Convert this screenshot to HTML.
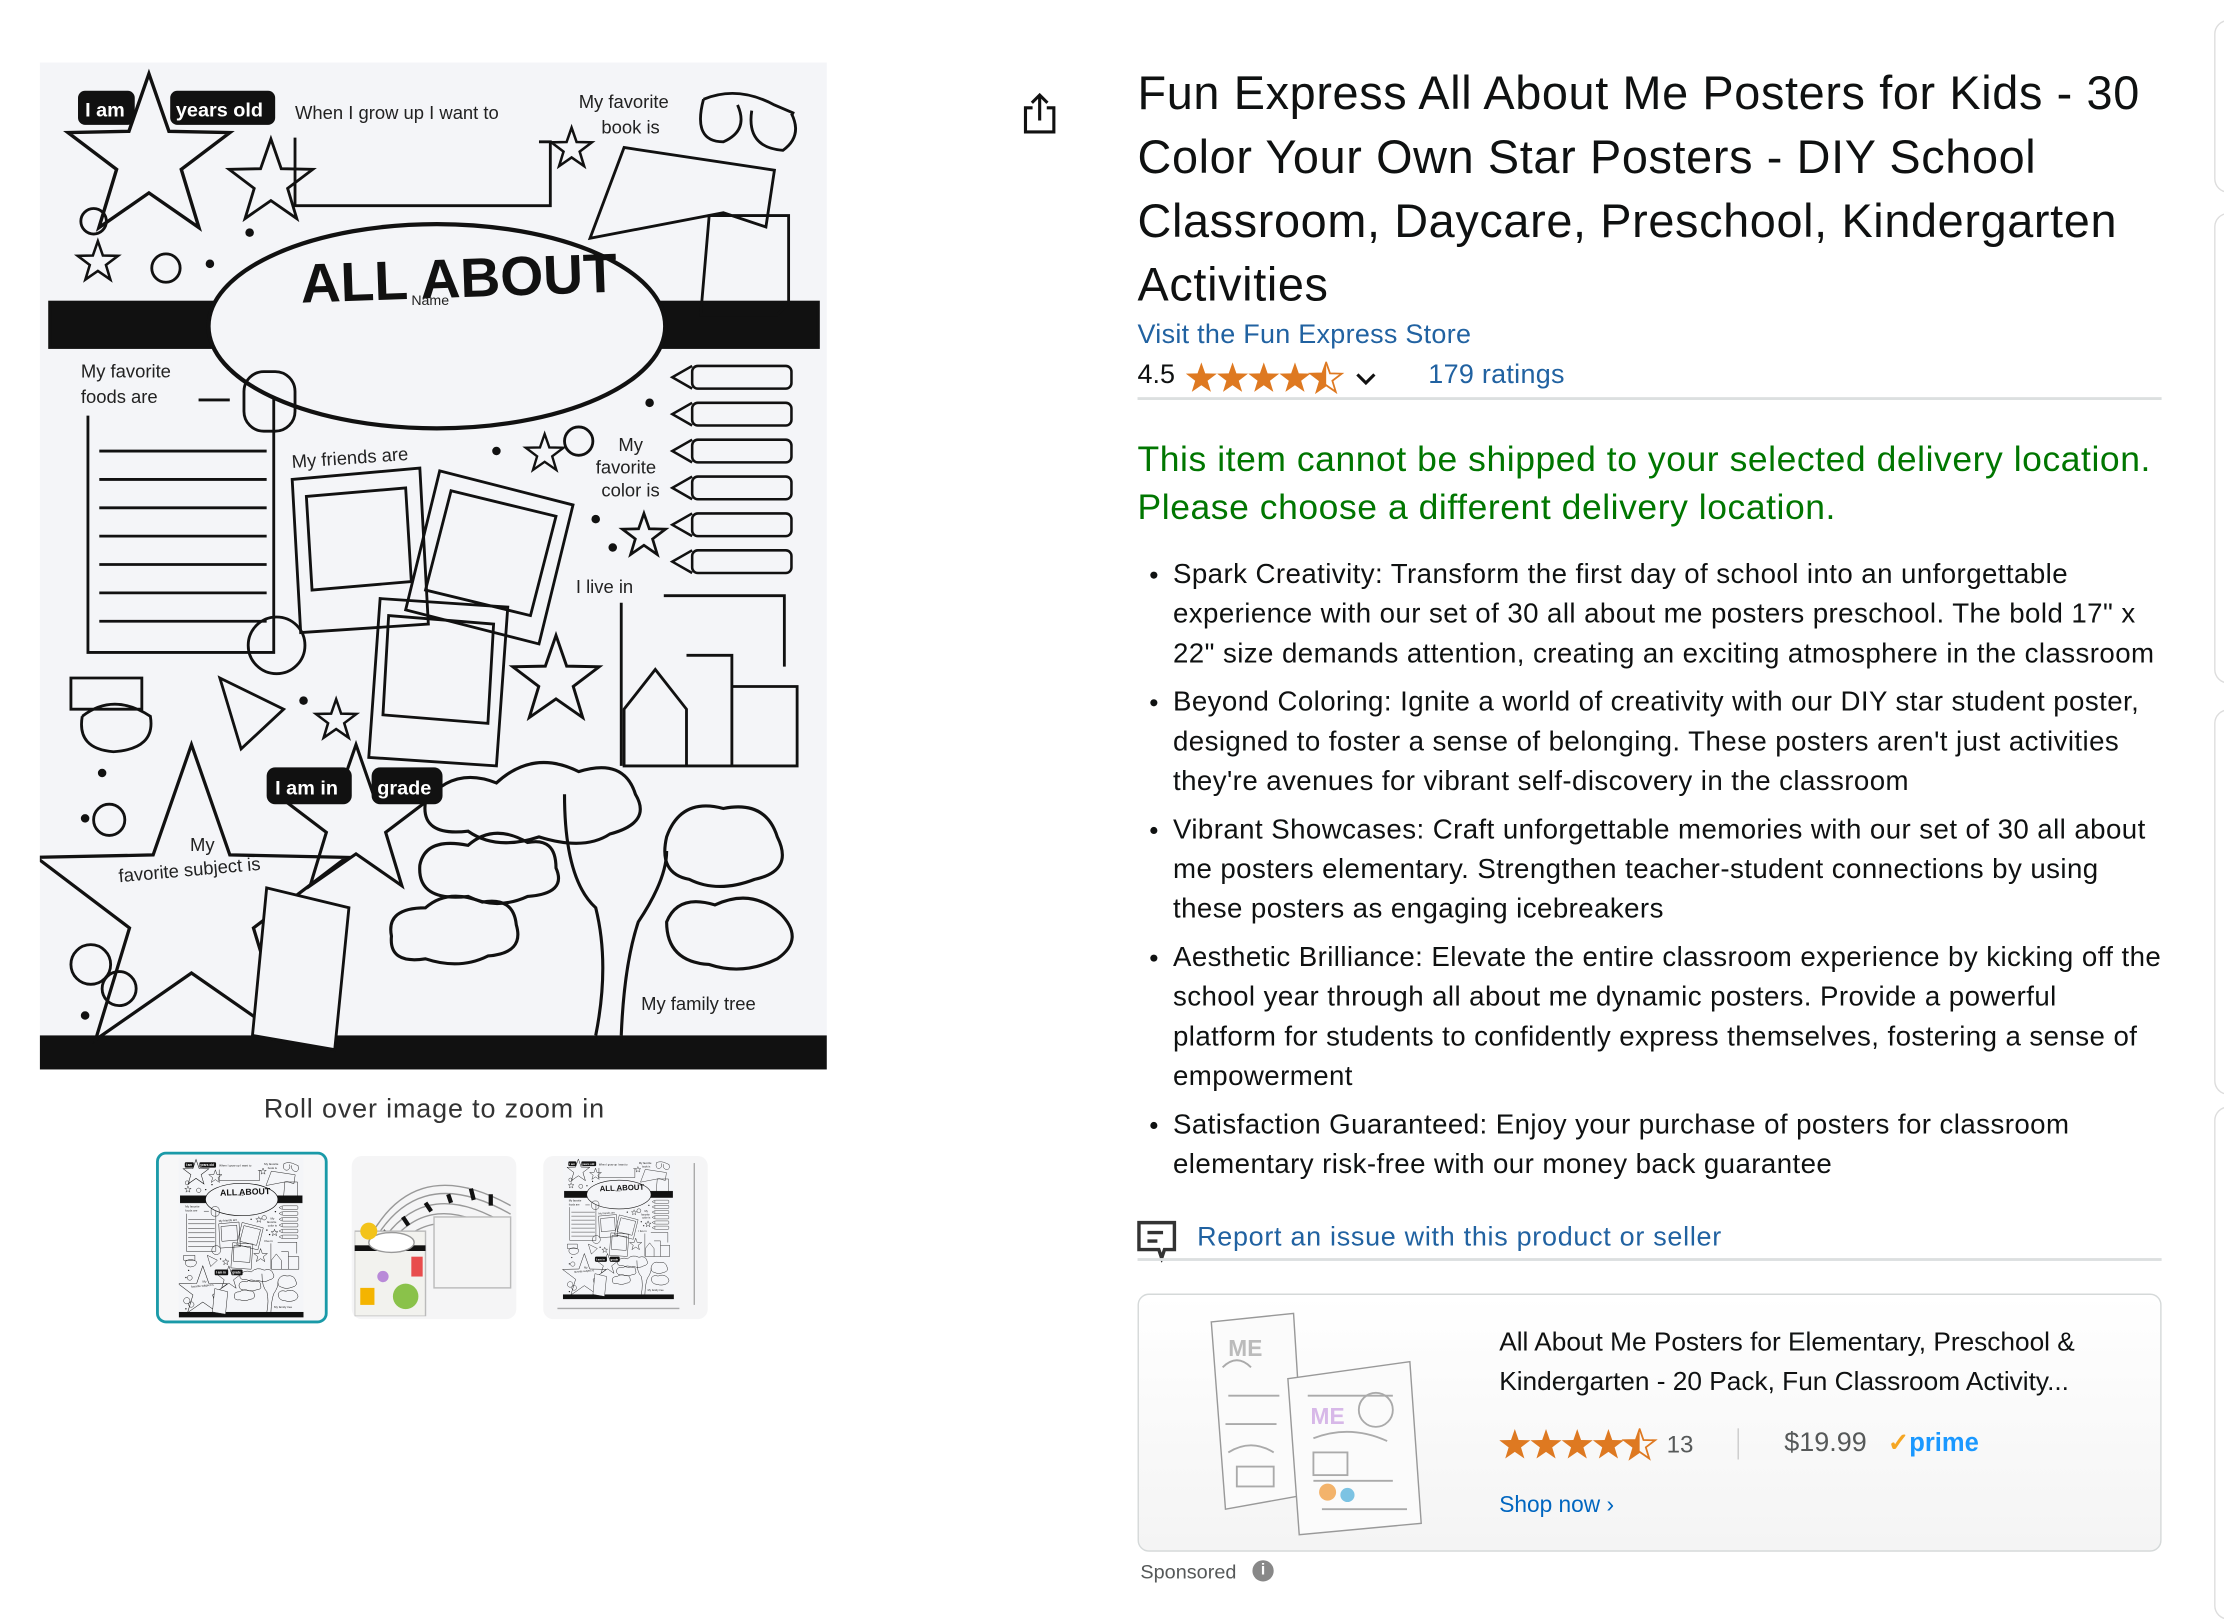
<!DOCTYPE html>
<html><head><meta charset="utf-8">
<style>
html,body{margin:0;padding:0;background:#fff;overflow:hidden}
#w{position:absolute;left:0;top:0;width:1568px;height:1140px;transform:scale(1.41837);transform-origin:0 0;font-family:"Liberation Sans",Arial,sans-serif;color:#0f1111}
.a{position:absolute;white-space:nowrap}
.title{left:802px;top:43px;font-size:33px;line-height:45px;color:#0f1111;letter-spacing:0.45px}
.blue{color:#2162a1}
.green{left:802px;top:307px;font-size:25px;line-height:34px;color:#007600;letter-spacing:0.4px}
ul{position:absolute;left:802px;top:391px;margin:0;padding:0 0 0 25px;font-size:19.5px;line-height:28px;list-style:none;letter-spacing:0.3px}
li{position:relative;margin-bottom:6px;white-space:nowrap}
li:before{content:"";position:absolute;left:-16px;top:12px;width:5px;height:5px;border-radius:50%;background:#0f1111}
.hr{position:absolute;left:802px;width:722px;height:2px;background:#dcdfe0}
.card{position:absolute;left:802px;top:912px;width:720px;height:180px;border:1.5px solid #d5d9d9;border-radius:8px;background:linear-gradient(#fff,#f4f4f4)}
.thumb{position:absolute;border-radius:7px;background:#f5f5f6}
</style></head><body><div id="w">
<svg width="0" height="0" style="position:absolute">
<defs>
<polygon id="sp" points="0,-1 .235,-.324 .951,-.309 .380,.124 .588,.809 0,.4 -.588,.809 -.380,.124 -.951,-.309 -.235,-.324"/>
<symbol id="poster" viewBox="28 44 555 710">
<rect x="28" y="44" width="555" height="710" fill="#f4f5f8"/>
<g fill="none" stroke="#111" stroke-width="2">
<rect x="35" y="213" width="542" height="32" fill="#111"/>
<ellipse cx="308" cy="230" rx="161" ry="72" fill="#f4f5f8" stroke-width="3"/>
<rect x="28" y="730" width="555" height="24" fill="#111" stroke="none"/>
<use href="#sp" transform="translate(105 112) scale(60)" stroke-width="0.04"/>
<use href="#sp" transform="translate(191 129) scale(31)" stroke-width="0.065"/>
<use href="#sp" transform="translate(69 185) scale(15)" stroke-width="0.12"/>
<use href="#sp" transform="translate(403 105) scale(15)" stroke-width="0.12"/>
<use href="#sp" transform="translate(392 480) scale(32)" stroke-width="0.065"/>
<use href="#sp" transform="translate(384 320) scale(14)" stroke-width="0.12"/>
<use href="#sp" transform="translate(454 378) scale(16)" stroke-width="0.12"/>
<use href="#sp" transform="translate(237 508) scale(15)" stroke-width="0.12"/>
<use href="#sp" transform="translate(135 640) scale(115)" stroke-width="0.02"/>
<use href="#sp" transform="translate(251 580) scale(55)" stroke-width="0.04"/>
<circle cx="66" cy="156" r="9"/><circle cx="117" cy="189" r="10"/><circle cx="408" cy="311" r="10"/><circle cx="77" cy="578" r="11"/><circle cx="64" cy="680" r="14"/><circle cx="84" cy="697" r="12"/>
<path d="M208 97 V145 H388 V100 H380"/>
<path d="M62 293 V460 H193 V280 M70 318H188 M70 338H188 M70 358H188 M70 378H188 M70 398H188 M70 418H188 M70 438H188 M140 282H162"/>
<path d="M206 338 L296 330 L302 440 L212 446Z M216 350 L286 344 L290 410 L220 416Z"/>
<path d="M310 332 L404 356 L380 454 L286 430Z M318 346 L392 364 L374 434 L300 416Z"/>
<path d="M268 422 L358 428 L350 540 L260 534Z M274 434 L348 440 L344 510 L270 504Z"/>
<g stroke-width="1.8"><rect x="488" y="258" width="70" height="16" rx="4"/><rect x="488" y="284" width="70" height="16" rx="4"/><rect x="488" y="310" width="70" height="16" rx="4"/><rect x="488" y="336" width="70" height="16" rx="4"/><rect x="488" y="362" width="70" height="16" rx="4"/><rect x="488" y="388" width="70" height="16" rx="4"/>
<path d="M488 258 L474 266 L488 274 M488 284 L474 292 L488 300 M488 310 L474 318 L488 326 M488 336 L474 344 L488 352 M488 362 L474 370 L488 378 M488 388 L474 396 L488 404"/></g>
<path d="M468 420 H553 V470 M438 425 V540"/>
<path d="M440 500 L462 472 L484 500 V540 H440Z M484 462 H516 V540 H484 M516 484 H562 V540 H516"/>
<path d="M416 168 L440 104 L546 120 L540 160 L510 150 Z M500 152 H556 V214 L548 222 H494Z" />
<path d="M496 70 Q520 60 546 74 L560 80 M496 70 Q488 100 510 100 Q528 92 520 74 M530 78 Q526 104 552 106 Q566 96 558 80"/>
<rect x="172" y="262" width="36" height="42" rx="14"/>
<circle cx="195" cy="455" r="20"/>
<path d="M50 478 H100 V500 H50Z M58 505 Q80 488 106 505 Q110 528 80 530 Q54 528 58 505"/>
<path d="M155 478 L200 500 L170 528 Z"/>
<path d="M188 626 L246 640 L236 740 L178 730Z" fill="#f4f5f8"/>
<g stroke-width="2.2">
<path d="M300 565 Q320 540 350 552 Q376 528 408 544 Q440 534 448 560 Q460 580 430 588 Q412 600 380 590 Q350 600 330 586 Q296 590 300 565Z"/>
<path d="M296 610 Q300 590 330 596 Q348 580 372 594 Q392 590 392 612 Q400 630 372 632 Q350 642 330 632 Q294 636 296 610Z"/>
<path d="M276 660 Q272 640 300 640 Q316 626 340 636 Q362 632 364 652 Q370 672 344 674 Q324 684 300 676 Q274 680 276 660Z"/>
<path d="M470 590 Q480 562 510 570 Q540 564 548 590 Q560 614 532 620 Q506 630 486 620 Q464 616 470 590Z"/>
<path d="M470 650 Q478 630 504 638 Q530 626 550 644 Q568 662 548 676 Q524 688 500 680 Q470 678 470 650Z"/>
<path d="M398 560 Q398 620 420 640 Q430 680 420 730 M438 730 Q440 680 450 650 Q470 620 470 600"/>
</g>
</g>
<g font-family="'Liberation Sans',sans-serif" font-weight="bold">
<rect x="55" y="64" width="40" height="24" rx="5" fill="#111"/><rect x="120" y="64" width="74" height="24" rx="5" fill="#111"/>
<text x="60" y="82" font-size="14" fill="#fff">I am</text><text x="124" y="82" font-size="14" fill="#fff">years old</text>
<rect x="188" y="541" width="60" height="26" rx="6" fill="#111"/><rect x="262" y="541" width="50" height="26" rx="6" fill="#111"/>
<text x="194" y="560" font-size="14" fill="#fff">I am in</text><text x="266" y="560" font-size="14" fill="#fff">grade</text>
<text x="212" y="210" font-size="39" fill="#111" transform="rotate(-2 310 200)">ALL ABOUT</text>
</g>
<g font-family="'Liberation Sans',sans-serif" font-size="13" fill="#222">
<text x="208" y="84">When I grow up I want to</text><text x="408" y="76">My favorite</text><text x="424" y="94">book is</text>
<text x="57" y="266">My favorite</text><text x="57" y="284">foods are</text><text x="206" y="330" transform="rotate(-4 206 330)">My friends are</text>
<text x="436" y="318">My</text><text x="420" y="334">favorite</text><text x="424" y="350">color is</text><text x="406" y="418">I live in</text>
<text x="134" y="600">My</text><text x="84" y="622" transform="rotate(-5 84 622)">favorite subject is</text><text x="452" y="712">My family tree</text><text x="290" y="215" font-size="10">Name</text>
</g>
<g fill="#111"><circle cx="176" cy="164" r="3"/><circle cx="148" cy="186" r="3"/><circle cx="350" cy="318" r="3"/><circle cx="458" cy="284" r="3"/><circle cx="420" cy="366" r="3"/><circle cx="432" cy="386" r="3"/><circle cx="214" cy="494" r="3"/><circle cx="72" cy="545" r="3"/><circle cx="60" cy="577" r="3"/><circle cx="60" cy="716" r="3"/></g>
</symbol>
</defs></svg>

<svg class="a" style="left:28px;top:44px" width="555" height="710"><use href="#poster" width="555" height="710"/></svg>
<div class="a" style="left:186px;top:772px;font-size:19px;color:#333;letter-spacing:0.6px">Roll over image to zoom in</div>

<div class="thumb" style="left:110px;top:812px;width:117px;height:117px;border:2px solid #1a9aa8;background:#f7f7f8"></div>
<svg class="a" style="left:126px;top:816px" width="88" height="113"><use href="#poster" width="88" height="113"/></svg>
<div class="thumb" style="left:248px;top:815px;width:116px;height:115px"></div>
<svg class="a" style="left:250px;top:816px" width="112" height="112">
<g fill="none" stroke="#999" stroke-width="1">
<path d="M8 70 Q40 0 110 40 M12 72 Q44 8 108 48 M16 74 Q48 16 106 56 M20 76 Q52 24 104 64 M6 66 Q38 -6 110 34"/></g>
<g stroke="#111" stroke-width="3"><path d="M10 62 L16 66 M20 52 L26 56 M34 42 L38 48 M50 32 L54 38 M66 26 L68 32 M82 22 L84 30 M96 26 L96 34"/></g>
<rect x="0" y="52" width="50" height="60" fill="#f2f2ee" stroke="#bbb"/><rect x="0" y="62" width="50" height="4" fill="#111"/><ellipse cx="26" cy="60" rx="16" ry="7" fill="#fff" stroke="#999"/><circle cx="10" cy="52" r="6" fill="#f3c31a"/><circle cx="36" cy="98" r="9" fill="#8ac24a"/><rect x="40" y="70" width="8" height="14" fill="#e84d4d"/><rect x="4" y="92" width="10" height="12" fill="#f4b400"/><circle cx="20" cy="84" r="4" fill="#b98ad8"/>
<rect x="56" y="42" width="54" height="50" fill="#f4f4f4" stroke="#bbb"/>
</svg>
<div class="thumb" style="left:383px;top:815px;width:116px;height:115px"></div>
<svg class="a" style="left:395px;top:816px" width="86" height="106"><use href="#poster" width="82" height="100"/></svg>
<div class="a" style="left:393px;top:922px;width:86px;border-top:1px solid #aaa"></div>
<div class="a" style="left:489px;top:820px;height:100px;border-left:1px solid #aaa"></div>

<svg class="a" style="left:719px;top:64px" width="28" height="32" viewBox="0 0 28 32" fill="none" stroke="#111" stroke-width="2.2"><path d="M9 12 H4 V29 H24 V12 H19"/><path d="M14 21 V3 M8.5 8.5 L14 3 L19.5 8.5"/></svg>

<div class="a title">Fun Express All About Me Posters for Kids - 30<br>Color Your Own Star Posters - DIY School<br>Classroom, Daycare, Preschool, Kindergarten<br>Activities</div>
<div class="a blue" style="left:802px;top:226px;font-size:19px;letter-spacing:0.2px">Visit the Fun Express Store</div>
<div class="a" style="left:802px;top:254px;font-size:19px">4.5</div>
<svg class="a" style="left:835px;top:255px" width="140" height="24" viewBox="0 0 140 24">
<defs><clipPath id="h"><rect x="-1" y="-1" width="1" height="2"/></clipPath></defs>
<g fill="#de7921"><use href="#sp" transform="translate(12 12) scale(11.5)"/><use href="#sp" transform="translate(34 12) scale(11.5)"/><use href="#sp" transform="translate(56 12) scale(11.5)"/><use href="#sp" transform="translate(78 12) scale(11.5)"/>
<g transform="translate(100 12) scale(11.5)"><use href="#sp" clip-path="url(#h)"/><use href="#sp" fill="none" stroke="#de7921" stroke-width="0.11"/></g></g>
<path d="M122 9 L128 15 L134 9" fill="none" stroke="#111" stroke-width="2.2"/></svg>
<div class="a blue" style="left:1007px;top:254px;font-size:19px;letter-spacing:0.2px">179 ratings</div>
<div class="hr" style="top:280px"></div>
<div class="a green">This item cannot be shipped to your selected delivery location.<br>Please choose a different delivery location.</div>
<ul>
<li>Spark Creativity: Transform the first day of school into an unforgettable<br>experience with our set of 30 all about me posters preschool. The bold 17" x<br>22" size demands attention, creating an exciting atmosphere in the classroom</li>
<li>Beyond Coloring: Ignite a world of creativity with our DIY star student poster,<br>designed to foster a sense of belonging. These posters aren't just activities<br>they're avenues for vibrant self-discovery in the classroom</li>
<li>Vibrant Showcases: Craft unforgettable memories with our set of 30 all about<br>me posters elementary. Strengthen teacher-student connections by using<br>these posters as engaging icebreakers</li>
<li>Aesthetic Brilliance: Elevate the entire classroom experience by kicking off the<br>school year through all about me dynamic posters. Provide a powerful<br>platform for students to confidently express themselves, fostering a sense of<br>empowerment</li>
<li>Satisfaction Guaranteed: Enjoy your purchase of posters for classroom<br>elementary risk-free with our money back guarantee</li>
</ul>
<svg class="a" style="left:801px;top:860px" width="30" height="30" viewBox="0 0 30 30" fill="none" stroke="#333" stroke-width="2.4"><path d="M2 2 H27 V21 H20 L18 27 L16 21 H2 Z"/><path d="M8 9 H19 M8 15 H15"/></svg>
<div class="a blue" style="left:844px;top:862px;font-size:19px;letter-spacing:0.5px">Report an issue with this product or seller</div>
<div class="hr" style="top:887px"></div>
<div class="card"></div>
<svg class="a" style="left:852px;top:924px" width="158" height="160" viewBox="0 0 158 160">
<g fill="#fbfbfb" stroke="#999" stroke-width="1"><path d="M2 8 L60 2 L68 130 L12 140Z"/><path d="M56 48 L142 36 L150 150 L64 158Z"/></g>
<g fill="none" stroke="#aaa" stroke-width="1.3"><path d="M10 40 Q20 30 30 40 M14 60 H50 M12 80 H48 M14 100 Q30 90 46 100 M70 60 H130 M74 90 Q100 80 126 92 M74 120 H130 M80 140 H140"/><rect x="20" y="110" width="26" height="14"/><circle cx="118" cy="70" r="12"/><rect x="74" y="100" width="24" height="16"/></g>
<text x="14" y="32" font-size="16" font-family="Liberation Sans" fill="#bbb" font-weight="bold">ME</text><text x="72" y="80" font-size="16" font-family="Liberation Sans" fill="#d7b8e8" font-weight="bold">ME</text>
<circle cx="84" cy="128" r="6" fill="#f3b36b"/><circle cx="98" cy="130" r="5" fill="#7cc3e3"/></svg>
<div class="a" style="left:1057px;top:932px;font-size:18.5px;line-height:28px;font-family:Arial,'Liberation Sans',sans-serif;color:#0f1111">All About Me Posters for Elementary, Preschool &amp;<br>Kindergarten - 20 Pack, Fun Classroom Activity...</div>
<svg class="a" style="left:1056px;top:1007px" width="116" height="24" viewBox="0 0 116 24">
<defs><clipPath id="h2"><rect x="-1" y="-1" width="1" height="2"/></clipPath></defs>
<g fill="#de7921"><use href="#sp" transform="translate(12 12) scale(11.5)"/><use href="#sp" transform="translate(34 12) scale(11.5)"/><use href="#sp" transform="translate(56 12) scale(11.5)"/><use href="#sp" transform="translate(78 12) scale(11.5)"/>
<g transform="translate(100 12) scale(11.5)"><use href="#sp" clip-path="url(#h2)"/><use href="#sp" fill="none" stroke="#de7921" stroke-width="0.11"/></g></g></svg>
<div class="a" style="left:1175px;top:1009px;font-size:17px;color:#565959">13</div>
<div class="a" style="left:1225px;top:1007px;height:22px;border-left:1.5px solid #ccc"></div>
<div class="a" style="left:1258px;top:1007px;font-size:19px;color:#565959;font-family:Arial,'Liberation Sans',sans-serif">$19.99</div>
<div class="a" style="left:1331px;top:1007px;font-size:18px;font-weight:bold;color:#1a98ff"><span style="color:#f5a623">✓</span>prime</div>
<div class="a" style="left:1057px;top:1053px;font-size:16px;color:#0066c0;font-family:Arial,'Liberation Sans',sans-serif">Shop now ›</div>
<div class="a" style="left:804px;top:1100px;font-size:14px;color:#565959">Sponsored</div>
<div class="a" style="left:883px;top:1100px;width:15px;height:15px;border-radius:50%;background:#888;color:#fff;font-size:11px;line-height:15px;text-align:center;font-weight:bold">i</div>
<div class="a" style="left:1561px;top:14px;width:20px;height:120px;border:1.5px solid #ddd;border-right:none;border-radius:10px 0 0 10px"></div>
<div class="a" style="left:1561px;top:150px;width:20px;height:330px;border:1.5px solid #ddd;border-right:none;border-radius:10px 0 0 10px"></div>
<div class="a" style="left:1561px;top:500px;width:20px;height:270px;border:1.5px solid #ddd;border-right:none;border-radius:10px 0 0 10px"></div>
<div class="a" style="left:1561px;top:780px;width:20px;height:360px;border:1.5px solid #ddd;border-right:none;border-radius:10px 0 0 10px"></div>
</div></body></html>
